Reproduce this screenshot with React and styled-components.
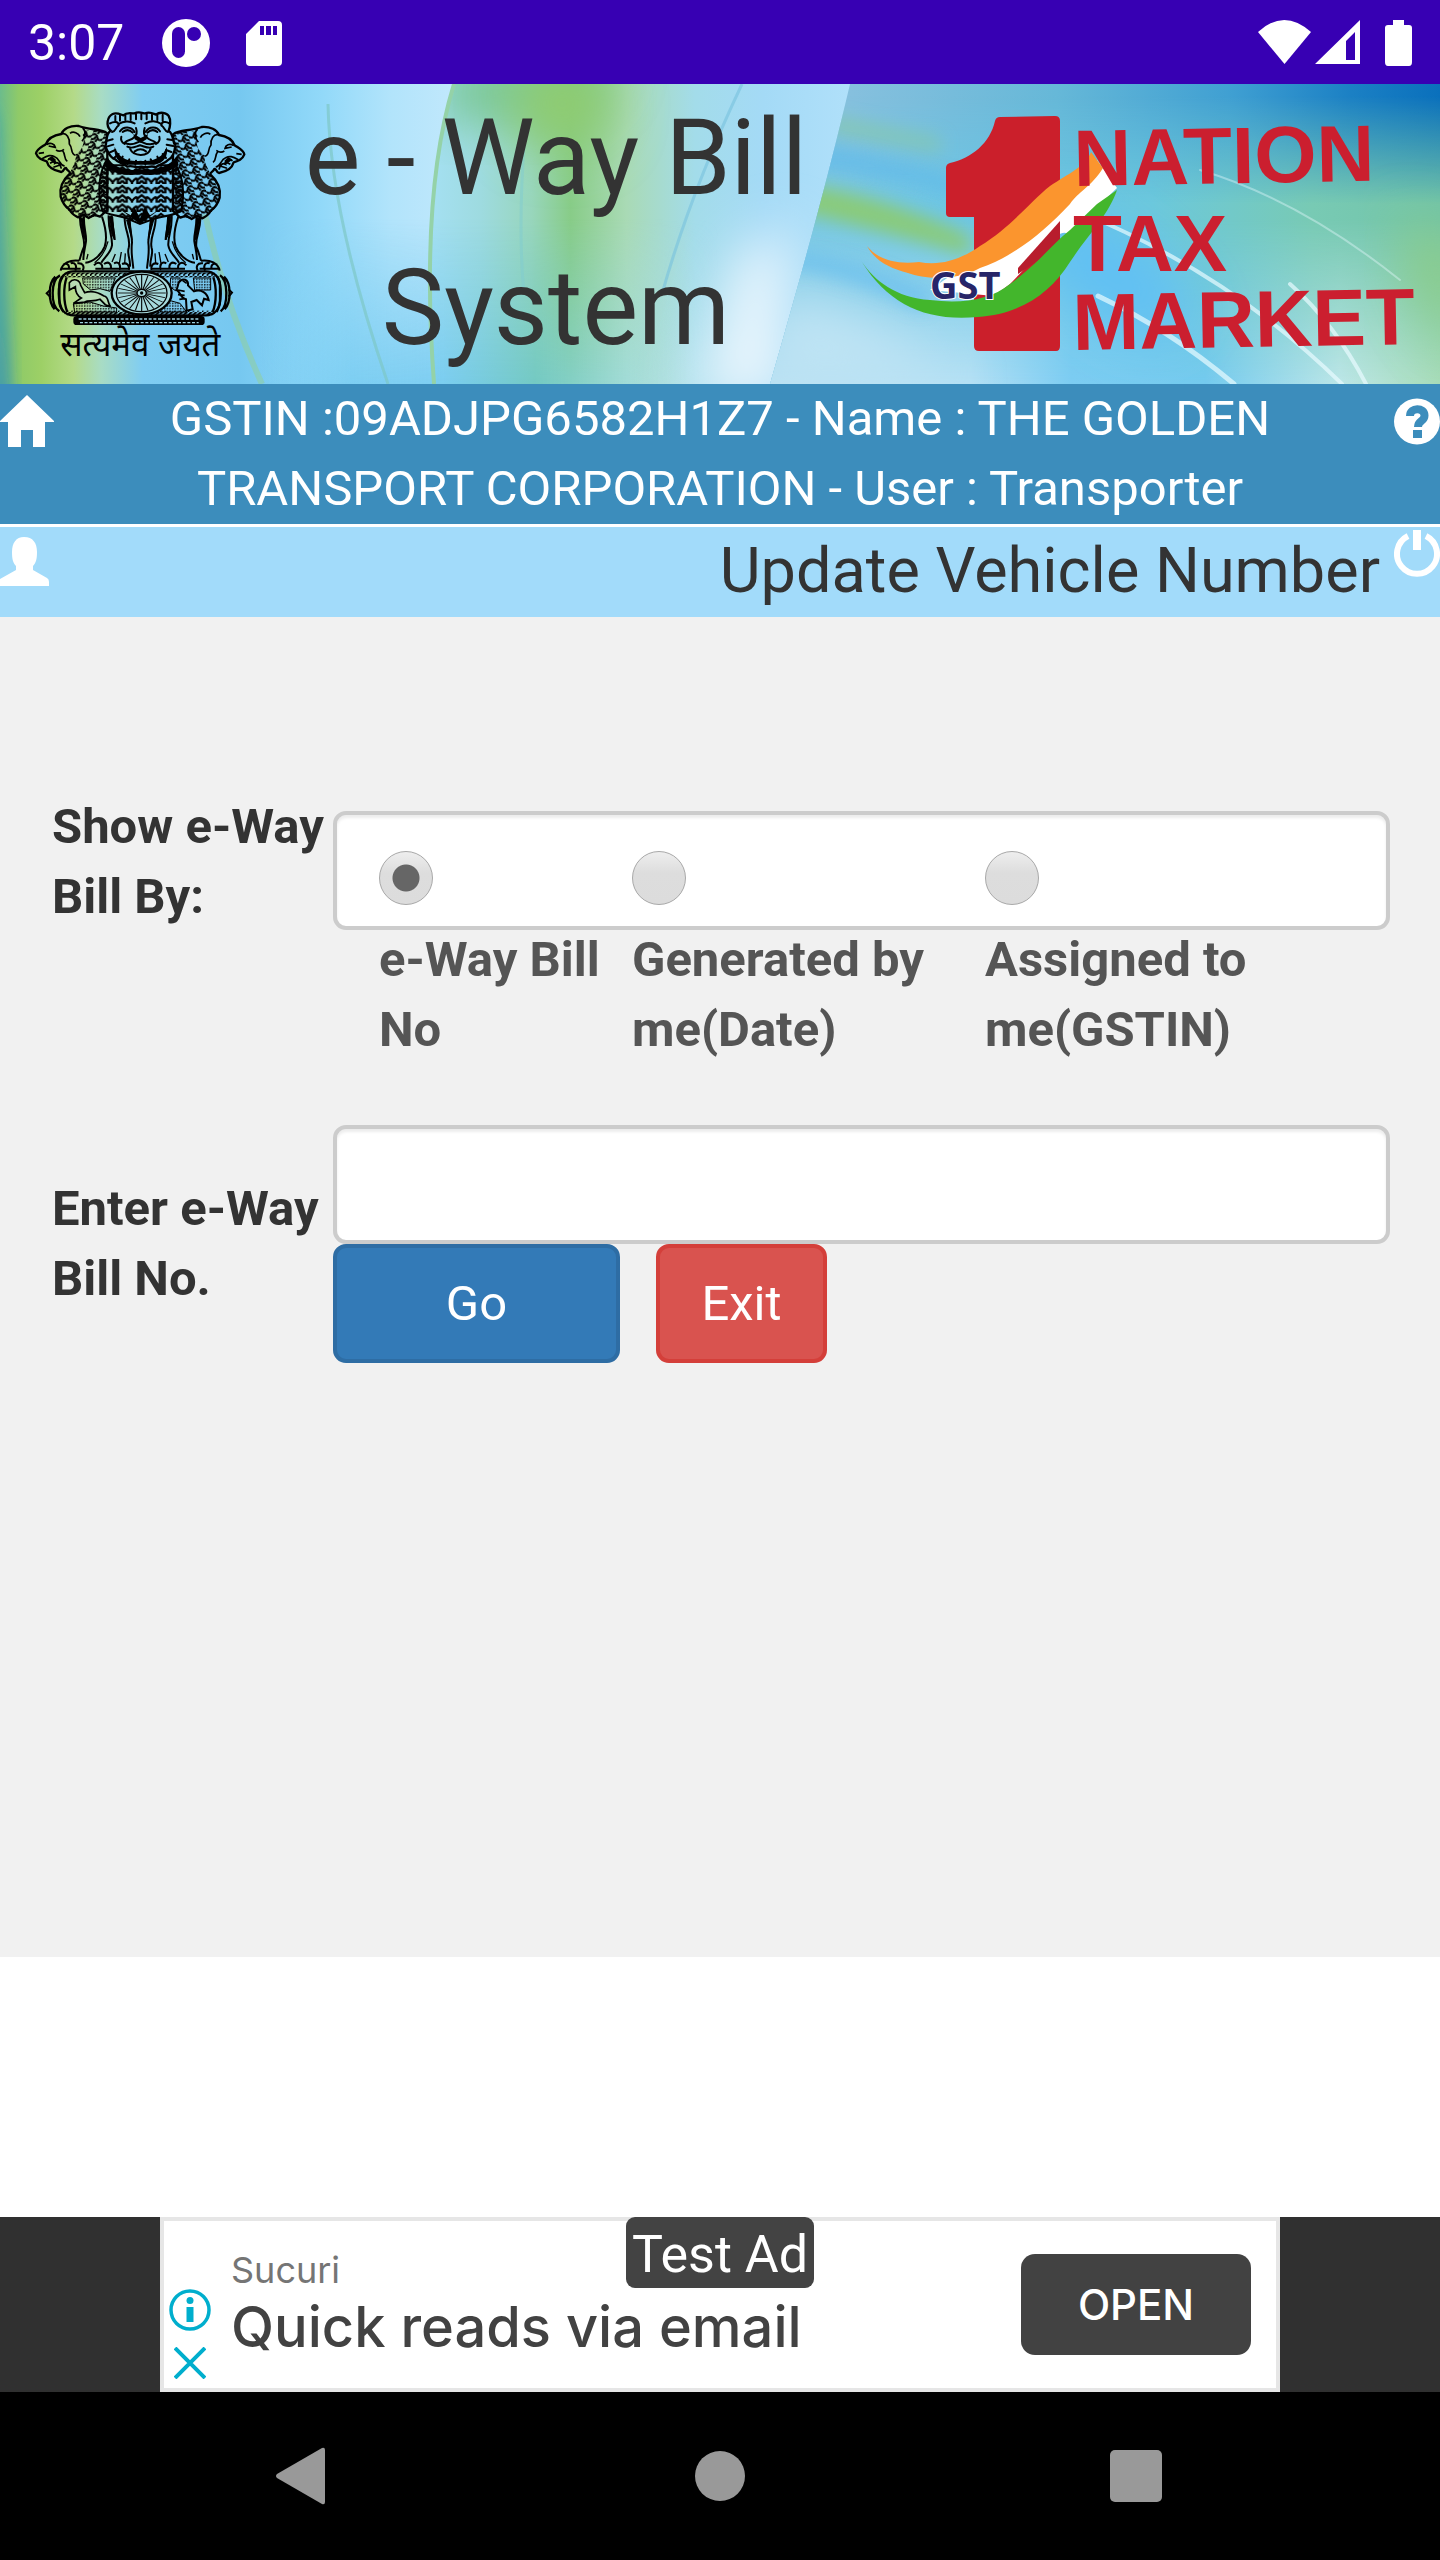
import React, { useState } from 'react';
import styled, { createGlobalStyle } from 'styled-components';

const GlobalStyle = createGlobalStyle`
    * {
        box-sizing: border-box;
    }
    body {
        margin: 0;
        background: #fff;
        color: #333;
        font-family: Roboto, "Liberation Sans", sans-serif;
        font-size: 49px;
        line-height: 70px;
    }
    svg {
        display: block;
    }
`;

const Page = styled.div`
    display: flex;
    flex-direction: column;
    min-height: 100vh;
`;

const StatusBar = styled.div`
    display: flex;
    align-items: center;
    justify-content: space-between;
    height: 84px;
    padding: 2px 28px 0;
    background: #3700b3;
    color: #fff;
    font-size: 50px;
`;

const StatusGroup = styled.div`
    display: flex;
    align-items: center;
    gap: ${props => props.$gap}px;
`;

const Banner = styled.header`
    position: relative;
    display: grid;
    grid-template-columns: 274px 1fr 602px;
    height: 300px;
    overflow: hidden;
`;

const BannerBackdrop = styled.svg`
    position: absolute;
    inset: 0;
    width: 100%;
    height: 100%;
    z-index: -1;
`;

const EmblemBox = styled.div`
    padding: 16px 0 0 20px;
`;

const SystemTitle = styled.h1`
    margin: 0;
    font-size: 105px;
    line-height: 150px;
    font-weight: 400;
    text-align: center;
`;

const InfoBar = styled.div`
    display: flex;
    align-items: flex-start;
    height: 143px;
    background: #3c8dbc;
    border-bottom: 3px solid #fff;
    color: #fff;
`;

const InfoText = styled.p`
    flex: 1;
    margin: 0;
    padding: 0 96px;
    text-align: center;
`;

const IconLink = styled.a`
    display: flex;
    flex: none;
    justify-content: ${props => props.$end ? 'flex-end' : 'flex-start'};
    width: 54px;
    padding-top: ${props => props.$top || 0}px;
    color: #fff;
`;

const TitleBar = styled.div`
    display: flex;
    align-items: flex-start;
    height: 90px;
    background: #a2dbfa;
`;

const PageTitle = styled.h2`
    flex: 1;
    margin: 0;
    padding-right: 6px;
    font-size: 63px;
    line-height: 88px;
    font-weight: 400;
    text-align: right;
`;

const Form = styled.form`
    min-height: 1340px;
    padding: 175px 50px 0 52px;
    background: #f1f1f1;
`;

const Row = styled.div`
    display: grid;
    grid-template-columns: 281px 1fr;
    min-height: ${props => props.$height || 0}px;
`;

const RowLabel = styled.label`
    padding-top: ${props => props.$top || 0}px;
    font-weight: 700;
`;

const controlBox = `
    width: 100%;
    height: 119px;
    border: 4px solid #ccc;
    border-radius: 13px;
    background: #fff;
    box-shadow: inset 0 3px 3px rgba(0, 0, 0, 0.075);
    color: #555;
`;

const RadioBox = styled.div`
    ${controlBox}
    display: grid;
    grid-template-columns: 253fr 353fr 401fr;
    margin-top: 19px;
    padding: 36px 0 0 42px;
`;

const Option = styled.label`
    display: flex;
    flex-direction: column;
    gap: 20px;
    padding-right: 16px;
    font-weight: 700;
`;

const Radio = styled.input`
    appearance: none;
    flex: none;
    width: 54px;
    height: 54px;
    margin: 0;
    border: 1px solid #a8a8a8;
    border-radius: 50%;
    background: linear-gradient(#eee, #ddd 40%, #dcdcdc);
    &:checked {
        background:
            radial-gradient(circle, #666 13px, transparent 14px),
            linear-gradient(#eee, #ddd 40%, #dcdcdc);
    }
`;

const TextInput = styled.input`
    ${controlBox}
    display: block;
    padding: 16px 30px;
    font: inherit;
`;

const Actions = styled.div`
    display: flex;
    gap: 36px;
`;

const Button = styled.button`
    width: ${props => props.$width}px;
    height: 119px;
    padding: 0;
    border: 4px solid ${props => props.$danger ? '#d43f3a' : '#2e6da4'};
    border-radius: 13px;
    background: ${props => props.$danger ? '#d9534f' : '#337ab7'};
    color: #fff;
    font: inherit;
    cursor: pointer;
`;

const AdStrip = styled.aside`
    display: flex;
    justify-content: center;
    height: 175px;
    margin-top: auto;
    background: #303030;
`;

const Ad = styled.div`
    position: relative;
    display: flex;
    width: 1120px;
    padding: 0 25px 0 5px;
    border: 4px solid #e6e6e6;
    background: #fff;
`;

const AdMarks = styled.div`
    display: flex;
    flex-direction: column;
    align-items: center;
    gap: 16px;
    width: 42px;
    padding-top: 68px;
`;

const AdCopy = styled.div`
    flex: 1;
    padding: 25px 0 0 20px;
    color: #424242;
    font-family: Inter, "Open Sans", sans-serif;
`;

const Advertiser = styled.p`
    margin: 0;
    color: #757575;
    font-size: 36px;
    line-height: 48px;
`;

const AdHeadline = styled.p`
    margin: 0;
    font-size: 56px;
    line-height: 66px;
    font-weight: 500;
`;

const TestBadge = styled.span`
    position: absolute;
    top: -4px;
    left: 462px;
    height: 71px;
    padding: 0 6px;
    border-radius: 9px;
    background: #434343;
    color: #fff;
    font-size: 52px;
    line-height: 76px;
`;

const OpenLink = styled.a`
    align-self: center;
    width: 230px;
    height: 101px;
    border-radius: 14px;
    background: #424242;
    color: #fff;
    font-family: Inter, "Open Sans", sans-serif;
    font-size: 42px;
    line-height: 101px;
    font-weight: 500;
    text-align: center;
    text-decoration: none;
`;

const NavBar = styled.nav`
    display: flex;
    align-items: center;
    justify-content: space-between;
    height: 168px;
    padding: 0 270px;
    background: #000;
`;

const NavButton = styled.button`
    padding: 0;
    border: 0;
    background: none;
    color: #999;
`;

const options = ['e-Way Bill No', 'Generated by me(Date)', 'Assigned to me(GSTIN)'];

const Backdrop = () => (
    <BannerBackdrop viewBox="0 0 1440 300" preserveAspectRatio="none" aria-hidden="true">
        <defs>
            <linearGradient id="sky" gradientUnits="userSpaceOnUse" x1="0" y1="0" x2="460" y2="0">
                <stop offset="0" stopColor="#6cbc8c" />
                <stop offset="0.04" stopColor="#8fca68" />
                <stop offset="0.09" stopColor="#9dd066" />
                <stop offset="0.16" stopColor="#b4da88" />
                <stop offset="0.22" stopColor="#a8dcc4" />
                <stop offset="0.31" stopColor="#80cdf2" />
                <stop offset="0.52" stopColor="#76c8f0" />
                <stop offset="0.7" stopColor="#92d9f9" />
                <stop offset="0.85" stopColor="#b2e4fb" />
                <stop offset="1" stopColor="#c2e8fc" />
            </linearGradient>
            <linearGradient id="leaf" gradientUnits="userSpaceOnUse" x1="420" y1="0" x2="850" y2="0">
                <stop offset="0" stopColor="#a6e1f6" />
                <stop offset="0.14" stopColor="#9edbe0" />
                <stop offset="0.26" stopColor="#98d6bc" />
                <stop offset="0.35" stopColor="#88cc88" />
                <stop offset="0.48" stopColor="#a9dab5" />
                <stop offset="0.64" stopColor="#a3dcea" />
                <stop offset="0.8" stopColor="#a4daf6" />
                <stop offset="1" stopColor="#b0e0fa" />
            </linearGradient>
            <linearGradient id="lowFade" x1="0" y1="0" x2="0" y2="1">
                <stop offset="0.45" stopColor="#000" />
                <stop offset="1" stopColor="#fff" />
            </linearGradient>
            <linearGradient id="lowTint" gradientUnits="userSpaceOnUse" x1="260" y1="0" x2="720" y2="0">
                <stop offset="0" stopColor="#74caf0" stopOpacity="0" />
                <stop offset="0.2" stopColor="#74caf0" stopOpacity="0.8" />
                <stop offset="0.4" stopColor="#76cbf0" stopOpacity="0.9" />
                <stop offset="0.6" stopColor="#70c8c4" stopOpacity="0.9" />
                <stop offset="0.8" stopColor="#a0dce0" stopOpacity="0.8" />
                <stop offset="1" stopColor="#c8eafa" stopOpacity="0" />
            </linearGradient>
            <mask id="lowMask" maskUnits="userSpaceOnUse" x="0" y="0" width="1440" height="300">
                <rect width="1440" height="300" fill="url(#lowFade)" />
            </mask>
            <linearGradient id="top" gradientUnits="userSpaceOnUse" x1="850" y1="0" x2="1440" y2="0">
                <stop offset="0" stopColor="#86c0de" />
                <stop offset="0.35" stopColor="#66b8d8" />
                <stop offset="0.65" stopColor="#3f9fd2" />
                <stop offset="0.85" stopColor="#1b80c4" />
                <stop offset="1" stopColor="#0a70bc" />
            </linearGradient>
            <linearGradient id="middle" gradientUnits="userSpaceOnUse" x1="800" y1="0" x2="1440" y2="0">
                <stop offset="0" stopColor="#78c8e4" />
                <stop offset="0.3" stopColor="#6cc6e4" />
                <stop offset="0.55" stopColor="#6cc8dc" />
                <stop offset="0.8" stopColor="#78cab4" />
                <stop offset="1" stopColor="#72c4a8" />
            </linearGradient>
            <linearGradient id="bottom" gradientUnits="userSpaceOnUse" x1="770" y1="0" x2="1440" y2="0">
                <stop offset="0" stopColor="#b8e0f2" />
                <stop offset="0.3" stopColor="#b4e0f4" />
                <stop offset="0.45" stopColor="#7cccf2" />
                <stop offset="0.65" stopColor="#74caee" />
                <stop offset="0.85" stopColor="#bce6e8" />
                <stop offset="1" stopColor="#a8dcb8" />
            </linearGradient>
            <linearGradient id="midFade" x1="0" y1="0" x2="0" y2="1">
                <stop offset="0.04" stopColor="#000" />
                <stop offset="0.4" stopColor="#fff" />
            </linearGradient>
            <mask id="midMask" maskUnits="userSpaceOnUse" x="0" y="0" width="1440" height="300">
                <rect width="1440" height="300" fill="url(#midFade)" />
            </mask>
            <filter id="soft" x="-50%" y="-80%" width="200%" height="260%">
                <feGaussianBlur stdDeviation="9" />
            </filter>
            <filter id="softer" x="-60%" y="-80%" width="220%" height="260%">
                <feGaussianBlur stdDeviation="26" />
            </filter>
            <clipPath id="leafArea">
                <path d="M454 0Q420 110 434 300H800L860 0Z" />
            </clipPath>
            <clipPath id="rightSide">
                <path d="M850 0Q822 120 770 300H1440V0Z" />
            </clipPath>
        </defs>
        <rect width="460" height="300" fill="url(#sky)" />
        <path d="M-20 30Q-2 160-4 320H8Q2 180-10 30Z" fill="#2483bc" filter="url(#soft)" />
        <path d="M205 130Q225 220 262 300" fill="none" stroke="#8fcfa4" strokeOpacity="0.6" strokeWidth="6" />
        <g clipPath="url(#leafArea)">
            <rect x="420" width="440" height="300" fill="url(#leaf)" />
            <path d="M440-20H620L560 36H440Z" fill="#74c48c" filter="url(#softer)" />
            <ellipse cx="562" cy="20" rx="50" ry="46" fill="#90cc70" filter="url(#softer)" />
        </g>
        <rect x="260" width="460" height="300" fill="url(#lowTint)" mask="url(#lowMask)" />
        <g clipPath="url(#leafArea)">
            <path d="M735 170L790 140L790 320H690Z" fill="#e6f4fc" filter="url(#softer)" />
        </g>
        <path d="M454 0Q420 110 434 300" fill="none" stroke="#94d2a8" strokeWidth="4" />
        <path d="M328 20Q330 130 388 300" fill="none" stroke="#7dc8c6" strokeOpacity="0.7" strokeWidth="3" />
        <path d="M742 0Q690 110 662 210" fill="none" stroke="#78c2dd" strokeOpacity="0.6" strokeWidth="3" />
        <path d="M524 60Q518 150 524 210" fill="none" stroke="#7fcbd0" strokeOpacity="0.5" strokeWidth="3" />
        <g clipPath="url(#rightSide)">
            <rect x="760" width="680" height="300" fill="url(#top)" />
            <rect x="760" width="680" height="300" fill="url(#middle)" mask="url(#midMask)" />
            <rect x="760" width="680" height="300" fill="url(#bottom)" mask="url(#lowMask)" />
            <path d="M1400 130L1460 160V270L1420 220Z" fill="#8ccc84" filter="url(#softer)" />
            <ellipse cx="1110" cy="190" rx="90" ry="40" fill="#60c0f4" filter="url(#softer)" transform="rotate(35 1110 190)" />
            <path d="M780 210Q880 230 960 300H760Z" fill="#c0e4f4" filter="url(#softer)" />
            <path d="M830 34L940 56V66L830 46Z" fill="#86c8a4" filter="url(#soft)" />
            <path d="M820 62Q900 76 980 104V118Q900 92 800 80Z" fill="#5cb8ec" filter="url(#soft)" opacity="0.7" />
            <path d="M800 100Q880 110 970 152V172Q880 146 790 126Z" fill="#8acb78" filter="url(#soft)" />
            <path d="M780 164Q860 176 940 212L920 226Q860 194 780 180Z" fill="#64bcf0" filter="url(#soft)" opacity="0.7" />
            <g fill="none" stroke="#e8fbff" strokeLinecap="round">
                <path d="M1080 128Q1230 190 1342 300" strokeWidth="4" opacity="0.7" />
                <path d="M1098 212Q1170 246 1234 300" strokeWidth="5" opacity="0.7" />
                <path d="M1290 200Q1335 240 1366 300" strokeWidth="4" opacity="0.7" />
                <path d="M1200 86Q1300 116 1400 196" strokeWidth="2" opacity="0.4" />
            </g>
        </g>
    </BannerBackdrop>
);

// side lion, drawn facing left and mirrored for the right one
const SideLion = () => (
    <g>
        <path d="M176 78C150 76 130 86 124 102C100 106 84 116 78 132C64 142 50 148 48 160C54 176 66 180 80 184C84 200 100 212 124 216C134 212 130 204 138 204C142 214 150 212 150 220C128 240 118 266 122 290C128 312 138 322 150 330C154 342 164 346 174 352L190 344L206 354L222 344L240 350L262 330V100C240 84 214 92 176 78Z" fill="none" stroke="#000" strokeWidth="7" strokeLinejoin="round" />
        <path d="M196 92C214 90 236 84 262 104V330C240 350 206 358 172 352C146 338 130 318 124 290C118 266 128 240 150 222C156 196 170 190 166 164C190 150 196 120 188 104Z" fill="url(#curlsLeft)" />
        <path d="M124 102C140 96 150 116 148 132C160 146 150 160 166 166M188 84C200 94 196 112 186 124M80 134C92 126 104 132 106 142L86 138M56 160L72 158M66 176C84 166 92 164 104 170C120 176 118 196 134 198M84 180C90 170 104 176 104 190C112 184 122 192 124 206M90 190L102 184M100 202L118 196M150 100C160 92 176 100 180 110M128 152C138 164 130 176 142 184M108 150C118 156 124 154 132 148" fill="none" stroke="#000" strokeWidth="5" />
        <path d="M84 176L96 168L106 178L110 192L100 188Z" />
    </g>
);

const Legs = () => (
    <g fill="none" stroke="#000" strokeWidth="6">
        <path d="M180 350C178 390 196 410 192 440C184 458 182 470 178 482M192 350C190 384 200 400 198 424C194 450 190 462 190 480M246 350C258 386 262 416 254 440C246 462 220 486 196 488" />
        <path d="M266 346C264 392 278 408 276 436C272 460 254 470 244 488M274 346C276 376 284 400 284 420M314 350C312 390 334 414 326 444C320 462 332 476 330 500M328 352C326 380 336 400 336 428C332 460 338 480 340 506" />
        <path d="M264 424C256 456 240 476 224 488M304 456L298 490M316 460L314 490M204 462L200 478M286 462L276 486" strokeWidth="4" />
        <path d="M178 482C150 478 126 490 122 512M130 494C140 488 150 494 146 508M152 490C166 486 172 498 166 512M172 490C190 488 194 500 188 512M126 506H182M222 496C236 480 250 492 246 508M252 492C266 482 276 492 272 508M282 490C296 482 304 496 298 510M306 492C320 486 330 496 326 510M226 506H330" strokeWidth="6" />
        <path d="M182 356L190 354L196 420L188 400ZM268 350H278L284 420L274 400ZM320 360H330L336 420Z" fill="#000" strokeWidth="3" />
    </g>
);

const spokes = Array.from({ length: 24 }, (_, i) => i * 15);

const Emblem = () => (
    <svg width="240" height="270" viewBox="0 0 720 810" role="img" aria-label="State Emblem of India">
        <defs>
            <pattern id="curlsLeft" width="34" height="25" patternUnits="userSpaceOnUse" patternTransform="rotate(18)">
                <path d="M-2 9C6 0 14 2 18 11C20 18 28 18 36 9M16 25C15 18 18 15 23 13M0 21C7 20 12 15 12 9" fill="none" stroke="#000" strokeWidth="6" />
            </pattern>
            <pattern id="curlsMid" x="365" width="58" height="28" patternUnits="userSpaceOnUse">
                <path d="M-2 4L13 16Q15 5 29 23Q43 5 45 16L60 4M13 16V30M45 16V30M0 18L9 28M58 18L49 28M29 20V30" fill="none" stroke="#000" strokeWidth="7" />
            </pattern>
            <pattern id="dots" width="8" height="8" patternUnits="userSpaceOnUse">
                <path d="M0 2H5M2 0V5" stroke="#000" strokeWidth="2" />
            </pattern>
            <pattern id="rope" width="14" height="12" patternUnits="userSpaceOnUse">
                <path d="M1 12Q2 3 13 1" fill="none" stroke="#000" strokeWidth="5" />
            </pattern>
        </defs>
        <SideLion />
        <g transform="matrix(-1 0 0 1 721 3)"><SideLion /></g>
        <Legs />
        <g transform="matrix(-1 0 0 1 721 0)"><Legs /></g>

        <path d="M252 196C236 230 232 290 248 334C280 350 300 346 322 356L360 372L398 358C430 346 460 350 484 332C494 280 488 230 468 196Z" fill="url(#curlsMid)" stroke="#000" strokeWidth="6" />
        <path d="M300 328L360 372L420 328L390 346L374 322L360 356L344 322L332 346Z" />
        <path d="M262 170C280 206 326 214 362 208C400 214 448 202 470 168L476 196C440 222 400 230 362 222C320 230 272 222 250 192Z" />

        <path d="M272 92C256 76 262 50 278 42C292 36 306 46 310 46C322 34 340 42 344 40C358 32 372 42 376 40C390 34 402 42 408 44C420 34 440 38 446 48C454 60 450 82 446 92C462 104 456 124 466 136C464 156 458 174 444 180C432 194 416 192 408 202C392 194 380 206 364 200C346 206 338 194 322 200C312 188 294 190 286 178C268 174 264 154 256 140C262 120 256 104 272 92Z" fill="#8bd0ec" stroke="#000" strokeWidth="7" />
        <g fill="none" stroke="#000" strokeWidth="6" strokeLinecap="round">
            <path d="M286 48V64M300 46V62M316 44V60M332 44V60M348 42V58M364 42V58M380 42V58M396 44V60M412 44V60M428 44V62M270 70C284 62 296 66 296 76C284 84 290 92 276 96M448 70C436 62 424 66 424 76C436 84 432 92 444 96" />
            <path d="M296 72C310 62 330 62 344 70M376 70C392 62 410 62 424 72M300 94C310 78 334 78 344 96M376 96C388 78 410 78 420 94M308 96Q324 84 338 98M382 98Q398 84 412 96" />
            <path d="M348 84C352 96 350 106 342 112C334 122 324 118 314 128C328 138 344 132 360 124C376 132 392 138 408 128C396 118 386 122 380 112C370 106 370 96 374 84" />
            <path d="M322 140C336 148 346 140 360 136C376 140 388 148 400 140M330 146C340 170 384 172 392 146M344 154Q362 142 378 154M314 132Q300 124 304 110M408 132Q422 124 418 110" />
            <path d="M262 122L278 118M260 140L280 134M268 158L286 150M282 174L296 162M300 184L308 170M322 192L328 178M346 194L348 182M376 194V182M400 190L392 178M420 184L412 170M438 174L428 162M454 156L438 150M460 138L440 134M456 120L442 118" />
        </g>
        <path d="M340 102L352 108L362 114L374 108L384 102L380 118L362 128L344 118Z" />
        <path d="M284 140C296 176 326 186 362 182C398 186 428 174 440 140C446 168 432 188 404 194H320C294 188 280 168 284 140Z" />

        <rect x="118" y="514" width="482" height="132" rx="42" fill="none" stroke="#000" strokeWidth="7" />
        <rect x="134" y="518" width="450" height="14" fill="url(#rope)" />
        <rect x="134" y="632" width="450" height="14" fill="url(#rope)" />
        <path d="M188 534H286L270 574L240 566L212 570L190 552ZM160 612L210 606L250 618L290 624V636H164ZM452 534H480V560L466 572L450 560ZM520 534H572V570H524ZM444 600L480 610L500 636H420Z" fill="url(#dots)" stroke="#000" strokeWidth="3" />
        <path d="M148 548C160 532 180 540 182 556L194 578C216 570 240 580 252 588C268 590 262 612 272 620L256 614L240 598C220 606 206 600 194 606L160 610L184 594C170 586 166 570 166 560L148 570Z" fill="#b8dcb4" stroke="#000" strokeWidth="5" />
        <path d="M476 548C488 530 506 540 504 556L522 574C544 566 562 580 566 600L552 596L546 616L530 600L514 606L518 628L500 632L498 598C480 594 482 576 470 570Z" fill="#84cff0" stroke="#000" strokeWidth="6" />
        <path d="M474 570L494 574M474 584L494 586M478 598L494 596M488 542L500 550" stroke="#000" strokeWidth="5" />
        <g fill="none" stroke="#000">
            <path d="M120 526C92 540 90 616 118 634M106 530C84 550 84 606 104 628M128 530C112 556 112 606 130 636M140 532C130 560 130 606 142 636" strokeWidth="7" />
            <path d="M600 526C624 540 626 616 602 634M612 530C634 550 634 606 614 628M592 530C606 556 606 606 590 636M580 532C590 560 590 606 578 636" strokeWidth="7" />
            <path d="M92 568L80 580L92 592M626 568L636 578L626 590" strokeWidth="6" />
        </g>
        <ellipse cx="365" cy="579" rx="92" ry="66" fill="#a6d9dc" />
        <ellipse cx="365" cy="579" rx="90" ry="64" fill="none" stroke="#000" strokeWidth="7" />
        <ellipse cx="365" cy="579" rx="76" ry="56" fill="none" stroke="#000" strokeWidth="4" />
        <g transform="translate(365 579) scale(1.34 1)" stroke="#000" strokeWidth="2.5">
            {spokes.map(angle => <path key={angle} d="M0-10V-54" transform={`rotate(${angle})`} />)}
        </g>
        <ellipse cx="365" cy="579" rx="14" ry="11" fill="none" stroke="#000" strokeWidth="4" />
        <circle cx="365" cy="579" r="5" />
        <rect x="160" y="648" width="394" height="27" rx="10" />
        <path d="M176 657H540M180 668H536" stroke="#9bcfe0" strokeWidth="4" strokeDasharray="9 5" />
        <text x="361" y="768" textAnchor="middle" fontFamily="'Noto Sans Devanagari', 'Noto Sans', sans-serif" fontSize="99">सत्यमेव जयते</text>
    </svg>
);

const NationTaxMarket = () => (
    <svg width="602" height="300" viewBox="838 84 602 300" role="img" aria-label="GST, 1 Nation Tax Market">
        <path d="M1000 117Q996 117 995 121C990 143 972 158 950 163Q946 164 946 168V213Q946 217 950 217H974V346Q974 351 979 351H1056Q1060 351 1060 346V121Q1060 116 1055 116Z" fill="#cb1f2b" />
        <path d="M1097 160L1117 188C1100 204 1086 222 1068 240C1070 230 1062 232 1056 236L1010 284L994 296L930 290L950 276C1000 262 1040 230 1078 176Z" fill="#fff" />
        <path d="M1060 221L1018 268V274L1045 256L1060 240Z" fill="#b81d2d" />
        <path d="M1091 152L1103 168C1092 186 1078 192 1070 204C1040 236 1010 258 980 268C960 280 926 280 908 273C890 268 876 262 867 246C880 262 900 264 919 262C940 266 960 260 980 246C1010 228 1030 202 1050 186C1068 174 1086 166 1091 152Z" fill="#fb952e" />
        <path d="M862 262C874 280 896 298 930 300C962 304 990 300 1010 284C1040 262 1050 246 1070 230L1097 204L1117 190C1108 216 1090 232 1070 262C1050 294 1020 314 978 317C926 322 888 304 862 262Z" fill="#43b62c" />
        <g fill="#cb1f2f" fontFamily="'Liberation Sans', Arial, sans-serif" fontWeight="700" fontSize="80">
            <text x="1074" y="186" transform="rotate(-1 1074 186)">NATION</text>
            <text x="1073" y="271">TAX</text>
            <text x="1073" y="350" transform="rotate(-1 1073 350)">MARKET</text>
        </g>
        <text x="930" y="299" fill="#272568" stroke="#fff" strokeWidth="2" paintOrder="stroke" fontFamily="'Liberation Sans Narrow', 'Open Sans', sans-serif" fontWeight="700" fontSize="38">GST</text>
    </svg>
);

export default function App() {
    const [selected, setSelected] = useState(options[0]);
    return (
        <Page>
            <GlobalStyle />
            <StatusBar>
                <StatusGroup $gap={36}>
                    <span>3:07</span>
                    <svg width="50" height="50" viewBox="0 0 50 50">
                        <circle cx="26" cy="25" r="24" fill="#fff" />
                        <rect x="12" y="9" width="13" height="31" rx="6.500" fill="#3700b3" />
                        <circle cx="34" cy="16" r="7" fill="#3700b3" />
                    </svg>
                    <svg width="36" height="45" viewBox="0 0 36 45">
                        <path fillRule="evenodd" d="M13 0H32Q36 0 36 4V41Q36 45 32 45H4Q0 45 0 41V13ZM14 5V14H18V5ZM20 5V14H25V5ZM27 5V14H31V5Z" fill="#fff" />
                    </svg>
                </StatusGroup>
                <StatusGroup $gap={0}>
                    <svg width="154" height="46" viewBox="1258 19 154 46" fill="#fff">
                        <path d="M1258 31Q1284 7 1311 31L1284.500 63Z" />
                        <path fillRule="evenodd" d="M1315 63L1360 19V63ZM1346 59H1355V31L1346 40Z" />
                        <path d="M1393 19H1404V24H1409Q1412 24 1412 27V61Q1412 65 1409 65H1388Q1385 65 1385 61V27Q1385 24 1388 24H1393Z" />
                    </svg>
                </StatusGroup>
            </StatusBar>

            <Banner>
                <Backdrop />
                <EmblemBox><Emblem /></EmblemBox>
                <SystemTitle>e - Way Bill System</SystemTitle>
                <NationTaxMarket />
            </Banner>

            <InfoBar>
                <IconLink href="#home" aria-label="Home" $top={11}>
                    <svg width="54" height="53" viewBox="0 0 54 53" fill="currentColor">
                        <path d="M27 0L54 26V27H45V52H33V35H21V52H8V27H0V26Z" />
                    </svg>
                </IconLink>
                <InfoText>GSTIN :09ADJPG6582H1Z7 - Name : THE GOLDEN TRANSPORT CORPORATION - User : Transporter</InfoText>
                <IconLink href="#help" aria-label="Help" $top={14} $end>
                    <svg width="46" height="47" viewBox="0 0 46 47">
                        <circle cx="23" cy="23.500" r="23" fill="#fff" />
                        <path d="M16 18C16 9 30.500 9 30.500 17.500C30.500 24 24 22 24 29" fill="none" stroke="#3c8dbc" strokeWidth="8" />
                        <rect x="19" y="32" width="9" height="8" fill="#3c8dbc" />
                    </svg>
                </IconLink>
            </InfoBar>

            <TitleBar>
                <IconLink href="#profile" aria-label="Profile" $top={10}>
                    <svg width="49" height="49" viewBox="0 0 49 49" fill="currentColor">
                        <path d="M24 0C33 0 37 6 37 15C37 22 36 26 33 29V33L47 41Q49 42 49 45V49H0V42L16 33V29C13 26 12 22 12 15C12 6 16 0 24 0Z" />
                    </svg>
                </IconLink>
                <PageTitle>Update Vehicle Number</PageTitle>
                <IconLink href="#logout" aria-label="Log out" $top={3} $end>
                    <svg width="46" height="49" viewBox="0 0 46 49" fill="none" stroke="currentColor">
                        <path d="M14 6A20 20 0 1 0 32 6" strokeWidth="6" />
                        <path d="M23 0V20" strokeWidth="8" />
                    </svg>
                </IconLink>
            </TitleBar>

            <Form onSubmit={e => e.preventDefault()}>
                <Row $height={333} role="radiogroup" aria-labelledby="show-by">
                    <RowLabel as="span" id="show-by">Show e-Way Bill By:</RowLabel>
                    <RadioBox>
                        {options.map(option => (
                            <Option key={option}>
                                <Radio
                                    type="radio"
                                    name="showBy"
                                    checked={selected === option}
                                    onChange={() => setSelected(option)}
                                />
                                {option}
                            </Option>
                        ))}
                    </RadioBox>
                </Row>
                <Row>
                    <RowLabel htmlFor="bill-no" $top={49}>Enter e-Way Bill No.</RowLabel>
                    <div>
                        <TextInput id="bill-no" type="text" />
                        <Actions>
                            <Button type="submit" $width={287}>Go</Button>
                            <Button type="button" $width={171} $danger>Exit</Button>
                        </Actions>
                    </div>
                </Row>
            </Form>

            <AdStrip>
                <Ad>
                    <AdMarks>
                        <svg width="42" height="42" viewBox="0 0 42 42" fill="none" stroke="#00aecd">
                            <circle cx="21" cy="21" r="19" strokeWidth="3.500" />
                            <path d="M21 18V33" strokeWidth="7" />
                            <circle cx="21" cy="11.500" r="3.500" fill="#00aecd" stroke="none" />
                        </svg>
                        <svg width="32" height="32" viewBox="0 0 32 32" fill="none" stroke="#00aecd" strokeWidth="4">
                            <path d="M1 1L31 31M31 1L1 31" />
                        </svg>
                    </AdMarks>
                    <AdCopy>
                        <Advertiser>Sucuri</Advertiser>
                        <AdHeadline>Quick reads via email</AdHeadline>
                    </AdCopy>
                    <TestBadge>Test Ad</TestBadge>
                    <OpenLink href="#open">OPEN</OpenLink>
                </Ad>
            </AdStrip>

            <NavBar>
                <NavButton type="button" aria-label="Back">
                    <svg width="60" height="60" viewBox="0 0 60 60" fill="currentColor">
                        <path d="M52 2Q55 1 55 4V56Q55 59 52 58L7 32Q5 30 7 28Z" />
                    </svg>
                </NavButton>
                <NavButton type="button" aria-label="Home screen">
                    <svg width="60" height="60" viewBox="0 0 60 60" fill="currentColor">
                        <circle cx="30" cy="30" r="25" />
                    </svg>
                </NavButton>
                <NavButton type="button" aria-label="Recent apps">
                    <svg width="60" height="60" viewBox="0 0 60 60" fill="currentColor">
                        <rect y="4" width="52" height="52" rx="5" />
                    </svg>
                </NavButton>
            </NavBar>
        </Page>
    );
}
